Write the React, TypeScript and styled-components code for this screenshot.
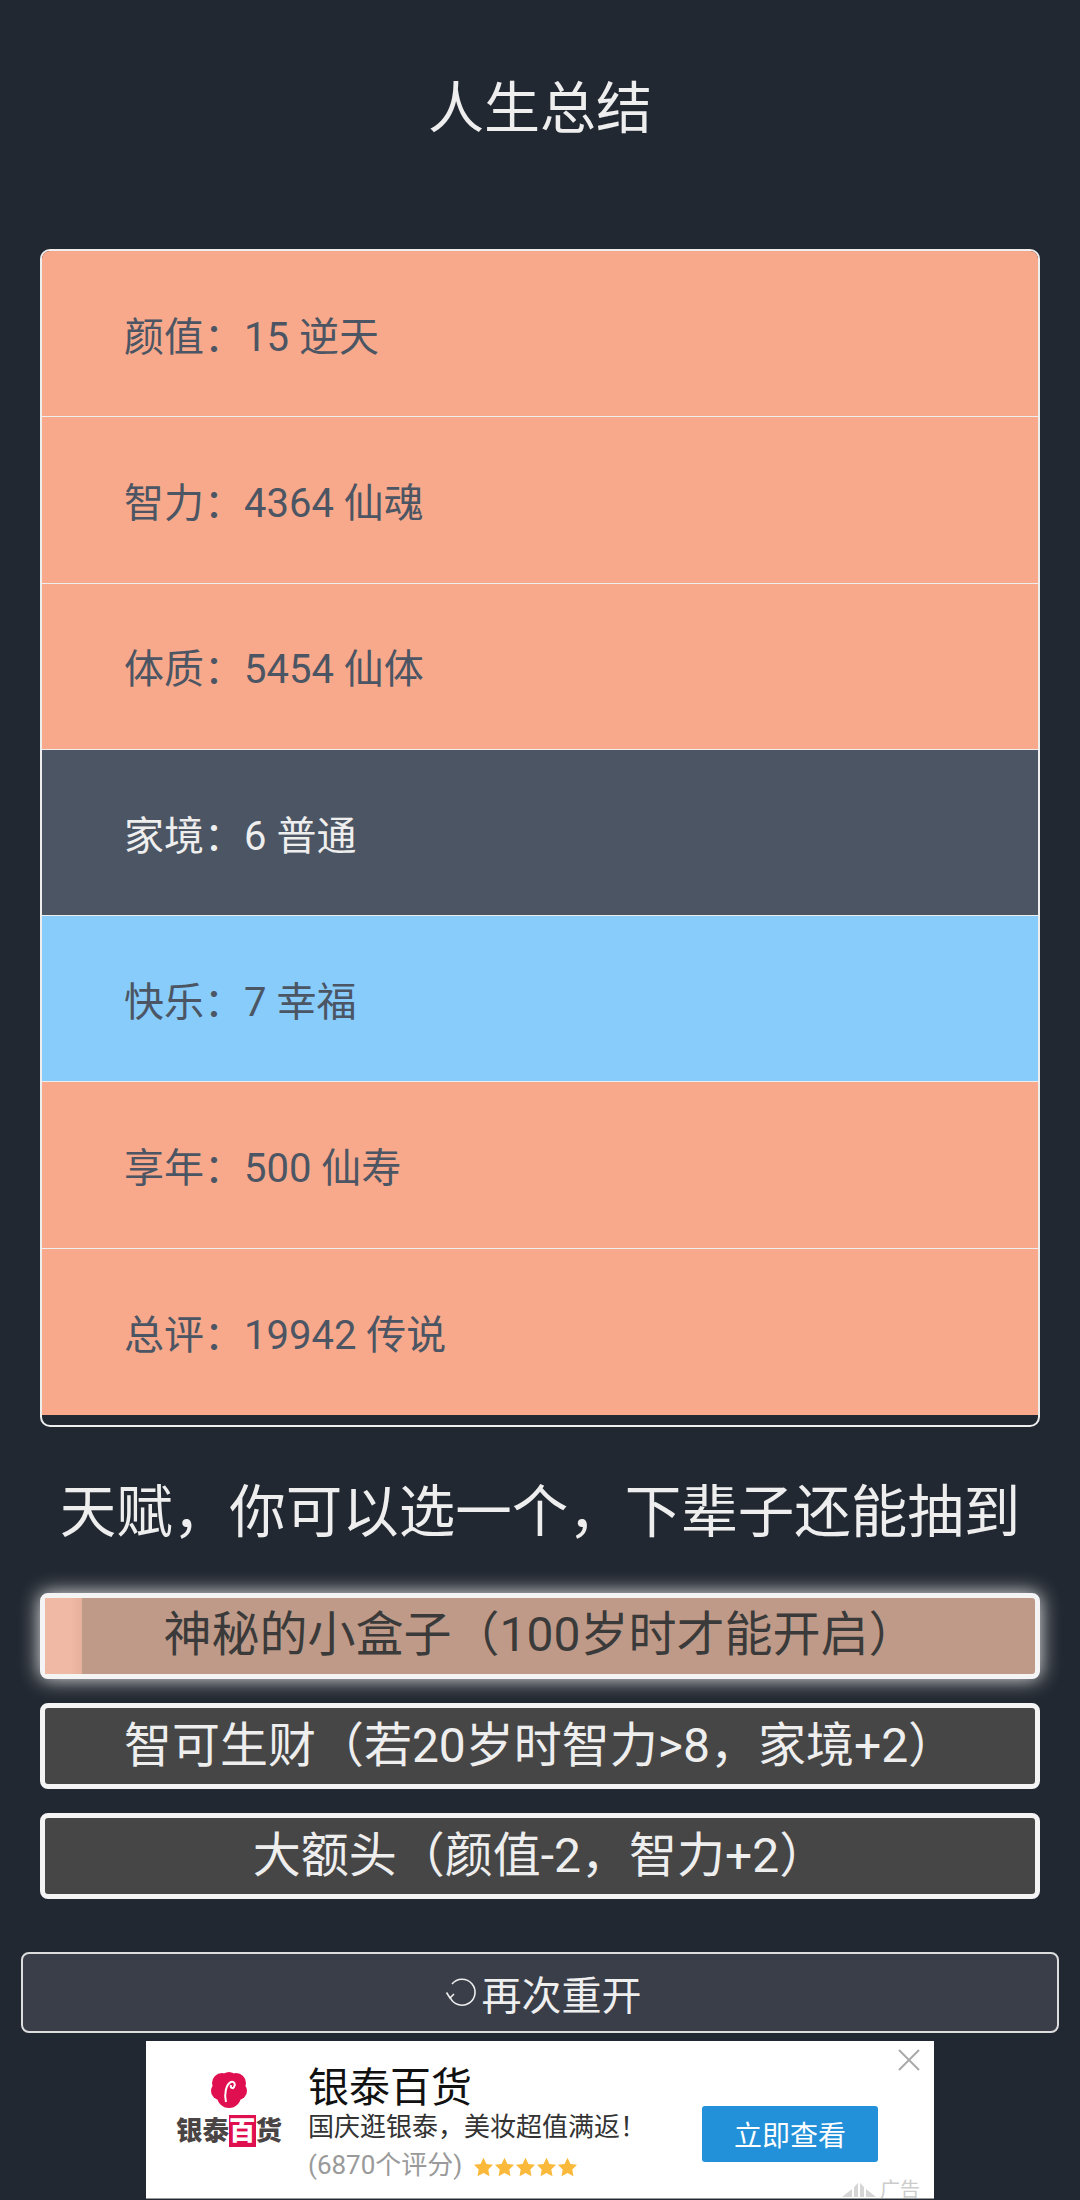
import React from "react";
import styled, { createGlobalStyle } from "styled-components";

const FONT = `Roboto, "Noto Sans CJK SC", "Noto Sans", sans-serif`;

const Global = createGlobalStyle`
  html, body { margin: 0; padding: 0; background: #222831; }
  body { font-family: ${FONT}; height: 2200px; overflow: hidden; }
  * { box-sizing: border-box; }
`;

const Page = styled.div`
  width: 1080px;
  height: 2200px;
  display: flex;
  flex-direction: column;
  align-items: center;
  background: #222831;
`;

const Title = styled.h1`
  margin: 0;
  height: 249px;
  padding-top: 71px;
  font-size: 56px;
  line-height: 76px;
  font-weight: 400;
  color: #eeeeee;
`;

const Card = styled.ul`
  margin: 0;
  padding: 0;
  list-style: none;
  width: 1000px;
  height: 1178px;
  border: 2px solid #eeeeee;
  border-radius: 10px;
  overflow: hidden;
`;

const colors = { orange: "#f8a98b", dark: "#4b5563", blue: "#88ccfb" };

const Row = styled.li<{ $tone: keyof typeof colors }>`
  height: 166.3px;
  padding-left: 82px;
  display: flex;
  align-items: center;
  font-size: 40px;
  background: ${(p) => colors[p.$tone]};
  color: ${(p) => (p.$tone === "dark" ? "#eeeeee" : "#4b5563")};
  border-bottom: 1.5px solid #eeeeee;
  &:last-child { border-bottom: none; }
`;

const Heading = styled.h2`
  margin: 0;
  height: 166px;
  padding-bottom: 6px;
  display: flex;
  align-items: center;
  font-size: 56.5px;
  font-weight: 400;
  color: #eeeeee;
  white-space: nowrap;
`;

const Choices = styled.div`
  width: 1000px;
  display: flex;
  flex-direction: column;
  gap: 24px;
`;

const Choice = styled.button<{ $selected?: boolean }>`
  position: relative;
  width: 1000px;
  height: 86px;
  padding: 0 0 ${(p) => (p.$selected ? "13px" : "10px")};
  border: 5px solid #f4f4f4;
  border-radius: 8px;
  overflow: visible;
  display: flex;
  align-items: center;
  justify-content: center;
  font-family: ${FONT};
  font-size: 48px;
  white-space: nowrap;
  background: ${(p) => (p.$selected ? "#c09a88" : "#464646")};
  color: ${(p) => (p.$selected ? "#3a3a3a" : "#eeeeee")};
  box-shadow: ${(p) => (p.$selected ? "0 0 20px #eeeeee" : "none")};
`;

const Progress = styled.span`
  position: absolute;
  left: 0;
  top: 0;
  bottom: 0;
  width: 37px;
  background: linear-gradient(90deg, #efb9a5 70%, #e5b09c);
`;

const ChoiceLabel = styled.span`
  position: relative;
`;

const Restart = styled.button`
  width: 1038px;
  height: 81px;
  margin-top: 53px;
  flex: none;
  border: 2px solid #dddddd;
  border-radius: 8px;
  background: #393e49;
  color: #eeeeee;
  font-family: ${FONT};
  font-size: 40px;
  display: flex;
  align-items: center;
  justify-content: center;
  gap: 5px;
  padding: 0 0 0 6px;
`;

const Ad = styled.div`
  position: relative;
  width: 788px;
  height: 158px;
  margin-top: 8px;
  flex: none;
  background: #ffffff;
  border-bottom: 1px solid #999999;
  display: flex;
  align-items: flex-start;
  overflow: hidden;
`;

const Logo = styled.div`
  width: 160px;
  margin-left: 3px;
  flex: none;
  padding-top: 31px;
  display: flex;
  flex-direction: column;
  align-items: center;
`;

const LogoText = styled.div`
  display: flex;
  align-items: center;
  font-size: 26.5px;
  line-height: 32px;
  font-weight: 900;
  color: #4a4444;
  margin-top: 7px;
`;

const LogoMark = styled.span`
  background: #e00f50;
  color: #ffffff;
`;

const AdBody = styled.div`
  width: 340px;
  margin-left: -1px;
  padding-top: 25px;
  flex: none;
`;

const AdName = styled.div`
  font-size: 41px;
  line-height: 45px;
  color: #111111;
`;

const AdDesc = styled.div`
  font-size: 26px;
  line-height: 32px;
  color: #333333;
  white-space: nowrap;
`;

const AdRating = styled.div`
  display: flex;
  align-items: center;
  gap: 11px;
  font-size: 26px;
  line-height: 44px;
  color: #9a9a9a;
  white-space: nowrap;
`;

const Stars = styled.span`
  display: flex;
  margin-top: 4px;
`;

const AdAction = styled.button`
  position: absolute;
  left: 556px;
  top: 65px;
  width: 176px;
  height: 56px;
  border: none;
  border-radius: 3px;
  background: #2391d9;
  color: #ffffff;
  font-family: ${FONT};
  font-size: 28px;
`;

const Close = styled.svg`
  position: absolute;
  right: 14px;
  top: 8px;
`;

const AdTag = styled.div`
  position: absolute;
  right: 14px;
  top: 136px;
  display: flex;
  align-items: center;
  gap: 4px;
  font-size: 20px;
  line-height: 26px;
  color: #cccccc;
`;

const Star = () => (
  <svg width="21" height="20" viewBox="0 0 24 23">
    <path d="M12 1l3.4 7 7.6 1-5.5 5.3 1.4 7.7-6.9-3.7-6.9 3.7 1.4-7.7L1 9l7.6-1z" fill="#fbb93c" />
  </svg>
);

const rows: { t: string; tone: keyof typeof colors }[] = [
  { t: "颜值：15 逆天", tone: "orange" },
  { t: "智力：4364 仙魂", tone: "orange" },
  { t: "体质：5454 仙体", tone: "orange" },
  { t: "家境：6 普通", tone: "dark" },
  { t: "快乐：7 幸福", tone: "blue" },
  { t: "享年：500 仙寿", tone: "orange" },
  { t: "总评：19942 传说", tone: "orange" },
];

export default function App() {
  return (
    <Page>
      <Global />
      <Title>人生总结</Title>
      <Card>
        {rows.map((r) => (
          <Row key={r.t} $tone={r.tone}>{r.t}</Row>
        ))}
      </Card>
      <Heading>天赋，你可以选一个，下辈子还能抽到</Heading>
      <Choices>
        <Choice $selected>
          <Progress />
          <ChoiceLabel>神秘的小盒子（100岁时才能开启）</ChoiceLabel>
        </Choice>
        <Choice>智可生财（若20岁时智力&gt;8，家境+2）</Choice>
        <Choice>大额头（颜值-2，智力+2）</Choice>
      </Choices>
      <Restart>
        <svg width="32" height="32" viewBox="0 0 32 32" fill="none" stroke="#eeeeee" strokeWidth="1.6">
          <path d="M5 20A13 13 0 1 0 7 7" />
          <path d="M1.5 15.5L5 21l4-4" />
        </svg>
        再次重开
      </Restart>
      <Ad>
        <Logo>
          <svg width="38" height="36" viewBox="0 0 38 36">
            <circle cx="12" cy="11" r="10" fill="#e00f50" />
            <circle cx="26" cy="11" r="10" fill="#e00f50" />
            <circle cx="19" cy="9" r="9" fill="#e00f50" />
            <circle cx="10" cy="19" r="9" fill="#e00f50" />
            <circle cx="28" cy="19" r="9" fill="#e00f50" />
            <circle cx="19" cy="24" r="12" fill="#e00f50" />
            <path d="M16 30c-2-8 0-18 5-20 3-1 5 2 3 5-1 2-4 1-3-2" fill="none" stroke="#ffffff" strokeWidth="2" />
          </svg>
          <LogoText>银泰<LogoMark>百</LogoMark>货</LogoText>
        </Logo>
        <AdBody>
          <AdName>银泰百货</AdName>
          <AdDesc>国庆逛银泰，美妆超值满返！</AdDesc>
          <AdRating>
            (6870个评分)
            <Stars><Star /><Star /><Star /><Star /><Star /></Stars>
          </AdRating>
        </AdBody>
        <AdAction>立即查看</AdAction>
        <Close width="22" height="22" viewBox="0 0 22 22" stroke="#aaaaaa" strokeWidth="2">
          <path d="M1 1l20 20M21 1L1 21" />
        </Close>
        <AdTag>
          <svg width="34" height="16" viewBox="0 0 34 16" fill="#d5d5d5">
            <path d="M0 15L10 7v8zM12 5l4-4v14h-4zM18 1l4 4v10h-4zM24 7l10 8H24z" />
          </svg>
          广告
        </AdTag>
      </Ad>
    </Page>
  );
}
